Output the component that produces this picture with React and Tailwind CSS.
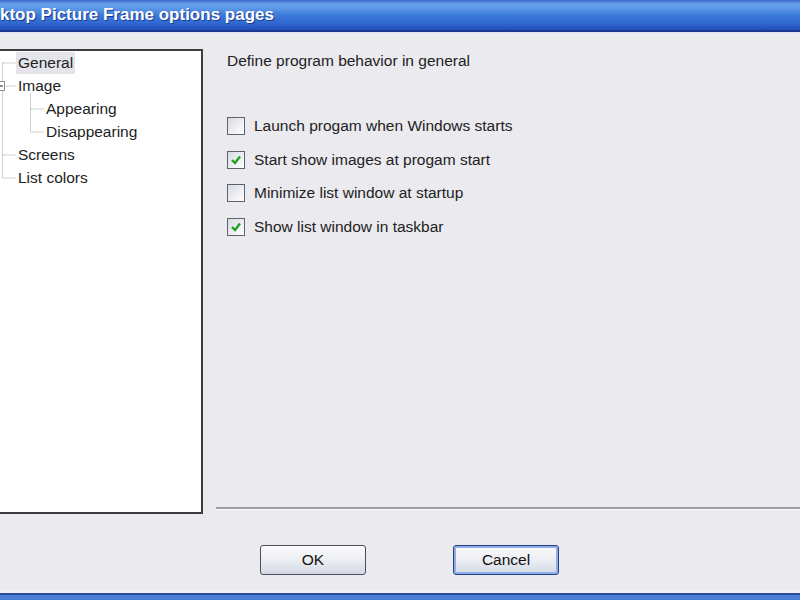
import React from "react";

const font = { fontFamily: '"Liberation Sans", Arial, sans-serif' };

const treeItems = [
  { label: "General", level: 0, selected: true },
  { label: "Image", level: 0 },
  { label: "Appearing", level: 1 },
  { label: "Disappearing", level: 1 },
  { label: "Screens", level: 0 },
  { label: "List colors", level: 0 },
];

const options = [
  { label: "Launch progam when Windows starts", checked: false },
  { label: "Start show images at progam start", checked: true },
  { label: "Minimize list window at startup", checked: false },
  { label: "Show list window in taskbar", checked: true },
];

function TreeLines() {
  // row centres inside the panel (rows are 23px tall, first at y=0)
  const c = (i) => i * 23 + 11.5;
  const dot = { stroke: "#a0a0a0", strokeWidth: 1, strokeDasharray: "1 1" };
  return (
    <svg className="absolute left-0 top-0 pointer-events-none" width="60" height="160">
      <line x1="2.5" y1={c(0)} x2="2.5" y2={c(5)} {...dot} />
      {[0, 1, 4, 5].map((i) => (
        <line key={i} x1="2.5" y1={c(i) + 0.5} x2="16" y2={c(i) + 0.5} {...dot} />
      ))}
      <line x1="30.5" y1={c(1) + 8} x2="30.5" y2={c(3)} {...dot} />
      {[2, 3].map((i) => (
        <line key={i} x1="30.5" y1={c(i) + 0.5} x2="44" y2={c(i) + 0.5} {...dot} />
      ))}
      <rect x="-4.5" y={c(1) - 4} width="9" height="9" fill="#fff" stroke="#8a94a6" />
      <line x1="-2" y1={c(1) + 0.5} x2="3" y2={c(1) + 0.5} stroke="#222" />
    </svg>
  );
}

function Checkbox({ checked }) {
  return (
    <div className="w-[18px] h-[18px] border border-[#5e6270] bg-gradient-to-br from-[#d9dbe2] to-[#ffffff] flex items-center justify-center shrink-0">
      {checked && (
        <svg width="12" height="12" viewBox="0 0 12 12">
          <path d="M2 6 L5 9 L10 2.5" fill="none" stroke="#22a022" strokeWidth="2.4" />
        </svg>
      )}
    </div>
  );
}

function XpButton({ children, focused }) {
  return (
    <button
      className={
        "w-[106px] h-[30px] rounded-[3px] border text-[15.5px] text-[#111] bg-gradient-to-b from-[#fbfbfd] via-[#eceef3] to-[#d2d8e4] " +
        (focused
          ? "border-[#243f86] shadow-[inset_0_0_0_2px_#8fb0e6]"
          : "border-[#4a4d5a]")
      }
      style={font}
    >
      {children}
    </button>
  );
}

export default function App() {
  return (
    <div className="w-[800px] h-[600px] overflow-hidden flex flex-col bg-[#ebeaef]" style={font}>
      {/* title bar */}
      <div className="h-[32px] shrink-0 flex items-center bg-[linear-gradient(to_bottom,#3a68c8_0px,#6aa2ee_4px,#5a94e6_9px,#3a78d8_16px,#2f66cf_24px,#2450c0_29px)] border-b-2 border-[#1c3a8e] overflow-hidden">
        <span className="mt-[-1px] text-[17px] font-bold text-white whitespace-nowrap [text-shadow:1px_1px_0_#1b3a8a]">
          ktop Picture Frame options pages
        </span>
      </div>
      <div className="h-px bg-[#dfe3f3]" />

      {/* body */}
      <div className="flex h-[481px] shrink-0">
        <div className="ml-[-2px] mt-[16px] w-[205px] h-[465px] border-2 border-[#3d3d3d] bg-white relative">
          <div className="relative">
            <TreeLines />
            {treeItems.map((it) => (
              <div key={it.label} className={"h-[23px] flex items-center " + (it.level ? "pl-[44px]" : "pl-[16px]")}>
                <span
                  className={
                    "px-[2px] h-[22px] flex items-center text-[15.5px] text-[#222] " +
                    (it.selected ? "bg-[#e4e4ea]" : "")
                  }
                >
                  {it.label}
                </span>
              </div>
            ))}
          </div>
        </div>

        <div className="ml-[13px] flex-1 flex flex-col">
          <div className="pl-[11px] pt-[18px] flex flex-col">
            <div className="h-[20px] flex items-center text-[15.5px] text-[#222]">
              Define program behavior in general
            </div>
            <div className="mt-[46px] flex flex-col gap-[15.5px]">
              {options.map((o) => (
                <div key={o.label} className="flex items-center gap-[9px] h-[18px]">
                  <Checkbox checked={o.checked} />
                  <span className="text-[15.5px] text-[#222] whitespace-nowrap">{o.label}</span>
                </div>
              ))}
            </div>
          </div>
          <div className="mt-auto mb-[4px] h-[2px] bg-[#9c9ca2] border-b border-white box-content" />
        </div>
      </div>

      {/* buttons */}
      <div className="flex pt-[31px] pl-[260px] gap-[87px]">
        <XpButton>OK</XpButton>
        <XpButton focused>Cancel</XpButton>
      </div>

      <div className="mt-auto h-[3px] bg-[#f3eef2]" />
      <div className="h-[7px] bg-[#4a80d8] border-t-2 border-[#2b4c9a]" />
    </div>
  );
}
